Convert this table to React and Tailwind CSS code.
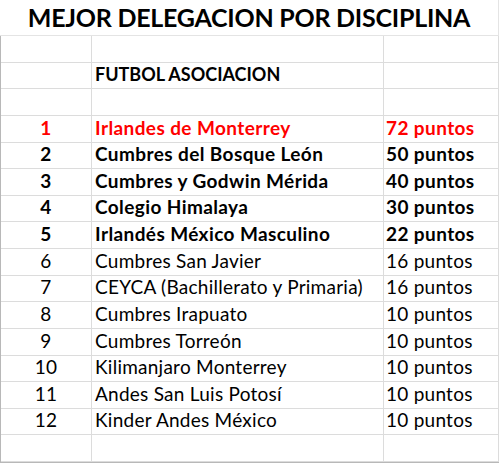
import React from "react";

const rows = [
  { n: "1", name: "Irlandes de Monterrey", pts: "72 puntos", bold: true, red: true },
  { n: "2", name: "Cumbres del Bosque León", pts: "50 puntos", bold: true },
  { n: "3", name: "Cumbres y Godwin Mérida", pts: "40 puntos", bold: true },
  { n: "4", name: "Colegio Himalaya", pts: "30 puntos", bold: true },
  { n: "5", name: "Irlandés México Masculino", pts: "22 puntos", bold: true },
  { n: "6", name: "Cumbres San Javier", pts: "16 puntos" },
  { n: "7", name: "CEYCA (Bachillerato y Primaria)", pts: "16 puntos" },
  { n: "8", name: "Cumbres Irapuato", pts: "10 puntos" },
  { n: "9", name: "Cumbres Torreón", pts: "10 puntos" },
  { n: "10", name: "Kilimanjaro Monterrey", pts: "10 puntos" },
  { n: "11", name: "Andes San Luis Potosí", pts: "10 puntos" },
  { n: "12", name: "Kinder Andes México", pts: "10 puntos" },
];

function Row({ a = "", b = "", c = "", bold = false, red = false, small = false }) {
  const txt = `${bold ? "font-bold tracking-[0.4px]" : "font-normal tracking-[0.25px]"} ${red ? "text-[#ff0000]" : "text-black"}`;
  return (
    <div className="flex h-[26.625px]">
      <div className={`w-[91px] flex items-end justify-center border-r border-b border-[#dcdcdc] pb-[5px] leading-none whitespace-nowrap ${txt}`}>
        {a}
      </div>
      <div className={`w-[292px] flex items-end border-r border-b border-[#dcdcdc] pl-[3px] pb-[5px] leading-none whitespace-nowrap ${txt} ${small ? "text-[18px] tracking-normal" : ""}`}>
        {b}
      </div>
      <div className={`w-[115px] flex items-end border-r border-b border-[#dcdcdc] pl-[2px] pb-[5px] leading-none whitespace-nowrap ${txt}`}>
        {c}
      </div>
    </div>
  );
}

export default function App() {
  return (
    <div className="w-[500px] h-[463px] bg-white overflow-hidden font-['Lato',sans-serif] text-[19px]">
      <div className="w-[499px] h-[36px] flex items-end justify-center border-r border-b border-[#e4e4e4] pb-[5.5px]">
        <span className="font-bold text-[25px] tracking-[-0.25px] leading-none text-black whitespace-nowrap">
          MEJOR DELEGACION POR DISCIPLINA
        </span>
      </div>
      <div className="w-[499px] border-l border-b border-[#b8b8b8]">
        <Row />
        <Row b="FUTBOL ASOCIACION" bold small />
        <Row />
        {rows.map((r) => (
          <Row key={r.n} a={r.n} b={r.name} c={r.pts} bold={r.bold} red={r.red} />
        ))}
        <Row />
      </div>
    </div>
  );
}
